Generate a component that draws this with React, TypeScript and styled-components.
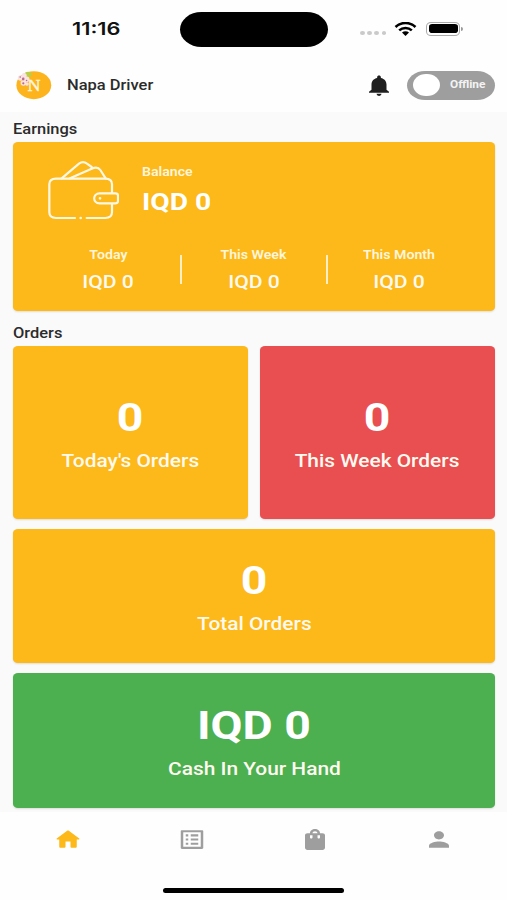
import React from "react";
import styled, { createGlobalStyle } from "styled-components";
import { MdListAlt, MdNotifications, MdPerson, MdShoppingBag } from "react-icons/md";

const GlobalStyle = createGlobalStyle`
  *, *::before, *::after { box-sizing: border-box; }
  body { margin: 0; background: #fff; font-family: Roboto, "Liberation Sans", sans-serif; }
`;

const Screen = styled.div`
  width: 507px;
  height: 900px;
  display: flex;
  flex-direction: column;
  background: #fefefe;
  overflow: hidden;
`;

const Label = styled.span<{
  $size: number;
  $weight?: number;
  $line: number;
  $stretch?: number;
  $color?: string;
  $left?: boolean;
}>`
  display: block;
  width: max-content;
  white-space: nowrap;
  font-size: ${(p) => p.$size}px;
  font-weight: ${(p) => p.$weight ?? 500};
  line-height: ${(p) => p.$line}px;
  color: ${(p) => p.$color ?? "#fff"};
  transform: scaleX(${(p) => p.$stretch ?? 1.16});
  transform-origin: ${(p) => (p.$left ? "left" : "center")} center;
`;

const StatusBar = styled.div`
  height: 58px;
  flex: none;
  display: grid;
  grid-template-columns: 180px 148px 1fr;
  align-items: start;
`;

const Clock = styled.div`
  padding: 19px 0 0 71.5px;
  font-family: Inter, sans-serif;
`;

const Island = styled.div`
  height: 35.5px;
  margin-top: 11.5px;
  border-radius: 22px / 18px;
  background: #000;
`;

const Indicators = styled.div`
  display: flex;
  align-items: center;
  padding: 20px 0 0 31px;
  height: 37px;
`;

const Cellular = styled.div`
  display: flex;
  gap: 2.6px;
  margin: 9px 8px 0 1px;
`;

const CellDot = styled.i`
  width: 4.6px;
  height: 4px;
  border-radius: 50%;
  background: #cacaca;
`;

const Battery = styled.div`
  width: 34px;
  height: 14px;
  margin-left: 9px;
  padding: 1.2px 1.6px;
  border: 1.2px solid #aaa;
  border-radius: 5px / 4.5px;
`;

const Charge = styled.div`
  height: 100%;
  border-radius: 3.2px / 2.8px;
  background: #000;
`;

const BatteryTip = styled.i`
  width: 2px;
  height: 4px;
  margin-left: 1px;
  border-radius: 0 2px 2px 0;
  background: #999;
`;

const Header = styled.header`
  height: 54px;
  flex: none;
  display: flex;
  align-items: center;
  padding: 0 12px 0 16px;
`;

const Title = styled.div`
  flex: 1;
  padding-left: 15px;
`;

const IconSlot = styled.span<{ $color: string }>`
  display: flex;
  color: ${(p) => p.$color};

  svg {
    width: 30px;
    height: 25px;
  }
`;

const Toggle = styled.div`
  width: 88px;
  height: 29px;
  margin-left: 13px;
  padding: 0 9px 0 6px;
  display: flex;
  align-items: center;
  justify-content: space-between;
  border-radius: 18px / 14.5px;
  background: #9e9e9e;
`;

const Knob = styled.div`
  width: 26.5px;
  height: 22.5px;
  border-radius: 50%;
  background: #fff;
`;

const ToggleText = styled.div`
  padding-right: 2.5px;
`;

const Content = styled.main`
  height: 700px;
  flex: none;
  padding: 0 12px 0 13px;
  background: #fafafb;
`;

const SectionTitle = styled.div<{ $top: number; $bottom: number }>`
  padding: ${(p) => p.$top}px 0 ${(p) => p.$bottom}px;
`;

const Card = styled.section<{ $tone?: string; $height: number }>`
  height: ${(p) => p.$height}px;
  border-radius: 5px / 4px;
  background: ${(p) => p.$tone ?? "#fdb819"};
  box-shadow: 0 1px 2px rgba(0, 0, 0, 0.12);
`;

const Balance = styled.div`
  display: flex;
  padding: 18px 0 0 34px;
  height: 103px;
`;

const BalanceText = styled.div`
  padding: 3px 0 0 23px;
`;

const Periods = styled.div`
  display: grid;
  grid-template-columns: repeat(3, 1fr);
  padding: 0 22.5px;
`;

const Period = styled.div`
  display: flex;
  flex-direction: column;
  align-items: center;
`;

const PeriodCell = styled.div<{ $divided: boolean }>`
  display: grid;
  grid-template-columns: 1fr 1.5px;
  align-items: center;
  margin-right: -0.75px;

  &::after {
    content: "";
    height: 29px;
    margin-bottom: 6px;
    background: ${(p) => (p.$divided ? "#ffeec6" : "transparent")};
  }
`;

const StatCard = styled(Card)`
  display: flex;
  flex-direction: column;
  align-items: center;
  justify-content: center;
  padding-top: 9px;
`;

const StatGrid = styled.div`
  display: grid;
  grid-template-columns: 1fr 1fr;
  column-gap: 12px;
  row-gap: 10px;

  > :nth-child(n + 3) { grid-column: 1 / -1; }
`;

const BottomNav = styled.nav`
  height: 54px;
  flex: none;
  display: grid;
  grid-template-columns: repeat(4, 123.6px);
  justify-content: center;
  align-items: center;
  justify-items: center;
`;

const HomeIndicator = styled.div`
  width: 181px;
  height: 5px;
  margin: 21.500px auto 0;
  border-radius: 3px;
  background: #000;
`;

const Logo = () => (
  <svg width="36" height="30" viewBox="0 0 36 30">
    <ellipse cx="17.8" cy="15.2" rx="17.4" ry="14" fill="#fdb31b" />
    <text
      x="11.5"
      y="20.500"
      fontFamily="Liberation Serif, serif"
      fontSize="17"
      fill="#fff6df"
      stroke="#fff6df"
      strokeWidth="0.4"
      textLength="13"
      lengthAdjust="spacingAndGlyphs"
    >
      N
    </text>
    <path d="M8 4c2-3 6-3 8 0-1 3-3 4-6 3z" fill="#b9cf45" />
    <g fill="#fbe3e3">
      <circle cx="4.5" cy="8" r="2.7" />
      <circle cx="8.2" cy="5.6" r="2.5" />
      <circle cx="10.7" cy="9.3" r="2.8" />
      <circle cx="7.4" cy="13" r="2.8" />
      <circle cx="11" cy="14" r="1.8" />
    </g>
    <g fill="#b56d8c">
      <circle cx="7.2" cy="8.9" r="1.3" />
      <circle cx="4.2" cy="7" r="0.8" />
      <circle cx="7.3" cy="13.3" r="1.1" />
      <circle cx="10.6" cy="10.5" r="0.8" />
    </g>
  </svg>
);

const Wifi = () => (
  <svg width="23" height="14" viewBox="0 0 22 14" fill="none" stroke="#000" strokeWidth="2.5">
    <path d="M1 5C6.5-.4 15.5-.4 21 5" />
    <path d="M4.7 8.400c3.5-3.300 9.100-3.300 12.600 0" />
    <path d="M7.500 10.500c2-1.800 5-1.800 7 0L11 13.900z" fill="#000" stroke="none" />
  </svg>
);

const Wallet = () => (
  <svg
    width="72"
    height="60"
    viewBox="141 60 216 180"
    fill="none"
    stroke="#fff8e5"
    strokeWidth="6.6"
    strokeLinecap="round"
    strokeLinejoin="round"
  >
    <path d="M225 234H168Q148 234 148 217V133Q148 116 168 116H316Q336 116 336 133V160H299C277 160 277 190 299 190H346Q354 190 354 183V167Q354 160 346 160H336M336 190V217Q336 234 316 234H260" />
    <path d="M185 115 237 71Q249 62 261 71L275 81M210 115 275 86Q293 78 301 90L317 115" />
    <path d="M242 234h.1M300 175h.1" strokeWidth="8" />
  </svg>
);

const Home = () => (
  <svg viewBox="0 0 24 24" fill="currentColor" preserveAspectRatio="none">
    <path d="M10 19v-5h4v5c0 .55.45 1 1 1h3c.55 0 1-.45 1-1v-7h1.7c.46 0 .68-.57.33-.87L12.67 3.6c-.38-.34-.96-.34-1.34 0l-8.36 7.53c-.34.3-.13.87.33.87H5v7c0 .55.45 1 1 1h3c.55 0 1-.45 1-1z" />
  </svg>
);

const tabs = [
  <Home />,
  <MdListAlt preserveAspectRatio="none" />,
  <MdShoppingBag preserveAspectRatio="none" />,
  <MdPerson preserveAspectRatio="none" />,
];

const periods = ["Today", "This Week", "This Month"];

const stats = [
  { value: "0", label: "Today's Orders", height: 173 },
  { value: "0", label: "This Week Orders", height: 173, tone: "#e94e50" },
  { value: "0", label: "Total Orders", height: 134.5 },
  { value: "IQD 0", label: "Cash In Your Hand", height: 134.5, tone: "#4caf50" },
];

export default function App() {
  return (
    <Screen>
      <GlobalStyle />
      <StatusBar>
        <Clock>
          <Label $size={17} $weight={600} $line={21} $color="#111" $stretch={1.28} $left>11:16</Label>
        </Clock>
        <Island />
        <Indicators>
          <Cellular>
            <CellDot /><CellDot /><CellDot /><CellDot />
          </Cellular>
          <Wifi />
          <Battery><Charge /></Battery>
          <BatteryTip />
        </Indicators>
      </StatusBar>

      <Header>
        <Logo />
        <Title>
          <Label $size={14.2} $line={20} $color="#2b2b2b" $left>Napa Driver</Label>
        </Title>
        <IconSlot $color="#1f1f1f"><MdNotifications preserveAspectRatio="none" /></IconSlot>
        <Toggle>
          <Knob />
          <ToggleText>
            <Label $size={10.5} $weight={700} $line={14} $stretch={1.13} $color="#f3f3f3">Offline</Label>
          </ToggleText>
        </Toggle>
      </Header>

      <Content>
        <SectionTitle $top={6} $bottom={1}>
          <Label $size={14.2} $line={23} $color="#2b2b2b" $left>Earnings</Label>
        </SectionTitle>
        <Card $height={168.5}>
          <Balance>
            <Wallet />
            <BalanceText>
              <Label $size={12.2} $line={18} $weight={600} $color="#fff6dc" $left>Balance</Label>
              <Label $size={23.5} $line={42} $weight={700} $stretch={1.2} $left>IQD 0</Label>
            </BalanceText>
          </Balance>
          <Periods>
            {periods.map((name, i) => (
              <PeriodCell key={name} $divided={i < 2}>
                <Period>
                  <Label $size={12.2} $line={20} $weight={600} $color="#fff6dc">{name}</Label>
                  <Label $size={18} $line={34} $stretch={1.175} $color="#fffaf0">IQD 0</Label>
                </Period>
              </PeriodCell>
            ))}
          </Periods>
        </Card>

        <SectionTitle $top={10} $bottom={1}>
          <Label $size={14.2} $line={24} $color="#2b2b2b" $left>Orders</Label>
        </SectionTitle>
        <StatGrid>
          {stats.map((s) => (
            <StatCard key={s.label} $height={s.height} $tone={s.tone}>
              <Label $size={39} $line={48} $weight={700} $stretch={1.19}>{s.value}</Label>
              <Label $size={18} $line={38} $color="#fffaf0">{s.label}</Label>
            </StatCard>
          ))}
        </StatGrid>
      </Content>

      <BottomNav>
        {tabs.map((icon, i) => (
          <IconSlot key={i} $color={i === 0 ? "#fdb819" : "#9e9e9e"}>{icon}</IconSlot>
        ))}
      </BottomNav>
      <HomeIndicator />
    </Screen>
  );
}
